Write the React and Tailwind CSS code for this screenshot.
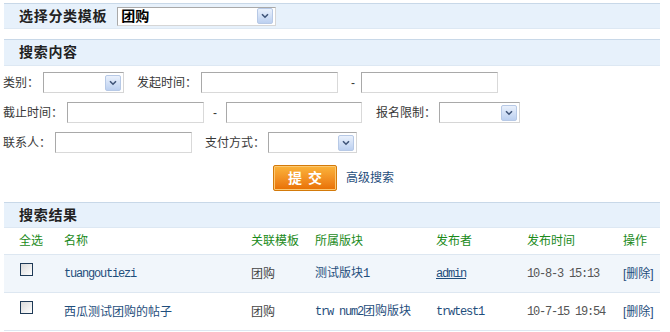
import React from 'react';

const Arrow = () => (
  <span className="flex h-[16px] w-[16px] items-center justify-center rounded-[2px] border border-[#b7c9e6] bg-gradient-to-b from-[#eaf1fc] to-[#bcd0f0]">
    <svg width="8" height="6" viewBox="0 0 8 6">
      <path d="M1 1.2 L4 4.2 L7 1.2" fill="none" stroke="#3f5478" strokeWidth="1.6" />
    </svg>
  </span>
);

function Select({ w, children, h = 'h-[21px]' }) {
  return (
    <div className={`flex ${h} ${w} items-center justify-between border border-[#a9a9a9] border-b-[#d6d6d6] border-r-[#d6d6d6] bg-white pl-[3px] pr-[2px]`}>
      <span>{children}</span>
      <Arrow />
    </div>
  );
}

const Input = ({ w }) => (
  <div className={`h-[21px] ${w} border border-[#a9a9a9] border-b-[#d9d9d9] border-r-[#d9d9d9] bg-white`} />
);

const Bar = ({ children, className = '' }) => (
  <div className={`flex h-[26px] items-center border-t border-b border-t-[#c8d8e8] border-b-[#dde8f3] bg-[#e7f1fb] pl-[15px] ${className}`}>
    {children}
  </div>
);

const Title = ({ children }) => (
  <span className="text-[14px] font-bold tracking-[0.7px] text-[#222]">{children}</span>
);

const mono = "font-['Liberation_Mono','Noto_Sans_CJK_SC',monospace] text-[12px] tracking-[-1.2px]";

const rows = [
  { name: 'tuangoutiezi', nameMono: true, tpl: '团购', board: <>测试版块<span className={mono}>1</span></>, user: 'admin', under: true, time: '10-8-3 15:13', bg: 'bg-[#f1f6fb]' },
  { name: '西瓜测试团购的帖子', nameMono: false, tpl: '团购', board: <><span className={mono}>trw num2</span>团购版块</>, user: 'trwtest1', under: false, time: '10-7-15 19:54', bg: 'bg-white' },
];

export default function App() {
  return (
    <div className="h-[332px] w-[670px] overflow-hidden bg-white font-['Liberation_Sans','Noto_Sans_CJK_SC',sans-serif] text-[12px] text-[#383838]">
      <div className="pl-[4px] pr-[10px] pt-[3px]">
        <Bar>
          <Title>选择分类模板</Title>
          <div className="ml-[10px]">
            <Select w="w-[159px]" h="h-[19px]">
              <span className="text-[14px] font-bold text-black">团购</span>
            </Select>
          </div>
        </Bar>
        <Bar className="mt-[10px] h-[27px]">
          <Title>搜索内容</Title>
        </Bar>
      </div>

      <div className="mt-[6px] flex flex-col gap-[9px] pl-[3px]">
        <div className="flex items-center">
          <span>类别：</span>
          <div className="ml-[4px]"><Select w="w-[81px]" /></div>
          <span className="ml-[13px]">发起时间：</span>
          <div className="ml-[4px]"><Input w="w-[137px]" /></div>
          <span className="ml-[13px]">-</span>
          <div className="ml-[6px]"><Input w="w-[137px]" /></div>
        </div>
        <div className="flex items-center">
          <span>截止时间：</span>
          <div className="ml-[4px]"><Input w="w-[137px]" /></div>
          <span className="ml-[9px]">-</span>
          <div className="ml-[9px]"><Input w="w-[136px]" /></div>
          <span className="ml-[14px]">报名限制：</span>
          <div className="ml-[3px]"><Select w="w-[81px]" /></div>
        </div>
        <div className="flex items-center">
          <span>联系人：</span>
          <div className="ml-[4px]"><Input w="w-[137px]" /></div>
          <span className="ml-[13px]">支付方式：</span>
          <div className="ml-[3px]"><Select w="w-[89px]" /></div>
        </div>
      </div>

      <div className="mt-[12px] flex items-center pl-[273px]">
        <button className="flex h-[26px] w-[64px] items-center justify-center rounded-[2px] border border-[#d37a0a] bg-gradient-to-b from-[#fbb43a] to-[#e86f00] text-[14px] font-bold tracking-[6px] text-white shadow-[inset_0_0_0_1px_#fcc873]">
          <span className="pl-[6px]">提交</span>
        </button>
        <span className="ml-[9px] text-[#1f4e7c]">高级搜索</span>
      </div>

      <div className="mt-[11px] pl-[4px] pr-[10px]">
        <Bar>
          <Title>搜索结果</Title>
        </Bar>
        <div className="grid h-[27px] grid-cols-[45px_187px_64px_121px_91px_96px_1fr] items-center border-b border-[#dde7f1] pl-[15px] text-[#1a8a1a]">
          <span>全选</span>
          <span>名称</span>
          <span>关联模板</span>
          <span>所属版块</span>
          <span>发布者</span>
          <span>发布时间</span>
          <span>操作</span>
        </div>
        {rows.map((r) => (
          <div key={r.user} className={`grid h-[38px] grid-cols-[45px_187px_64px_121px_91px_96px_1fr] items-center border-b border-[#dde7f1] pl-[15px] ${r.bg}`}>
            <span className="-mt-[9px] ml-[1px] block h-[13px] w-[13px] border border-[#1f3a57] bg-gradient-to-br from-[#d9d9d9] to-white" />
            <span className={`text-[#1f4e7c] ${r.nameMono ? mono : ''}`}>{r.name}</span>
            <span className="text-[#444]">{r.tpl}</span>
            <span className="text-[#1f4e7c]">{r.board}</span>
            <span className={`text-[#1f4e7c] ${mono} ${r.under ? 'underline' : ''}`}>{r.user}</span>
            <span className={`text-[#555] ${mono}`}>{r.time}</span>
            <span className="text-[#1f4e7c]">[删除]</span>
          </div>
        ))}
      </div>
    </div>
  );
}
